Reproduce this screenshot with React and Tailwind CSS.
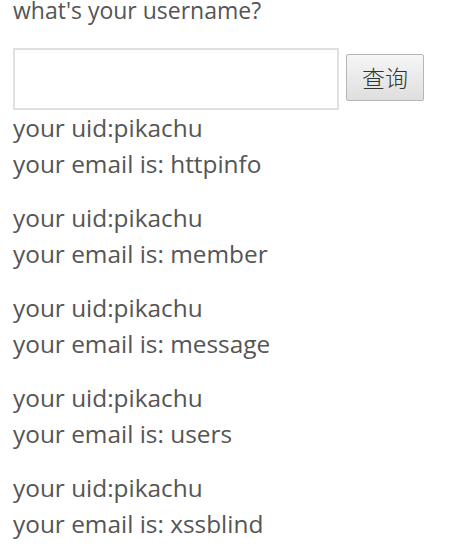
import React from 'react';

const rows = ['httpinfo', 'member', 'message', 'users', 'xssblind'];

export default function App() {
  return (
    <div className="bg-white min-h-screen pl-[13px] text-[24.4px] text-[#555] font-['Open_Sans',sans-serif]">
      <div className="text-[23px] leading-[18px] pt-[1px]">what's your username?</div>
      <div className="flex items-center gap-[7px] mt-[29px]">
        <input
          type="text"
          className="w-[326px] h-[62px] border-2 border-[#e0e0e0] bg-white outline-none px-2"
        />
        <button className="w-[78px] h-[47px] -mt-[3px] rounded-[2px] border border-[#b5b5b5] bg-gradient-to-b from-[#f6f6f6] to-[#dedede] text-[#333] text-[23px] font-['Noto_Sans_CJK_SC',sans-serif] font-light leading-none">
          查询
        </button>
      </div>
      <div className="flex flex-col gap-[18px] leading-[36px]">
        {rows.map((r) => (
          <div key={r}>
            <div>your uid:pikachu</div>
            <div>your email is: {r}</div>
          </div>
        ))}
      </div>
    </div>
  );
}
